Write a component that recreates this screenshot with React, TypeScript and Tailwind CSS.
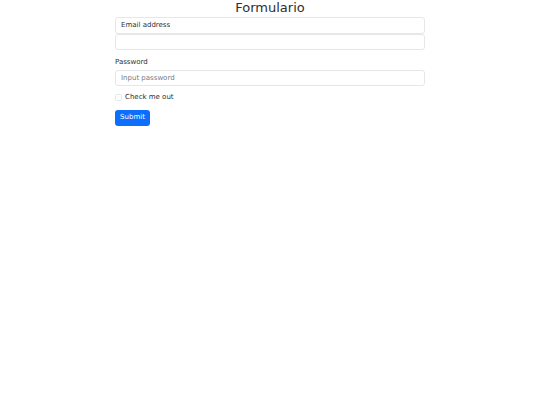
export default function App() {
  return (
    <div className="min-h-screen bg-white text-[#2b2f33] font-['DejaVu_Sans',sans-serif]">
      <div className="w-[310px] mx-auto">
        <h1 className="text-[13px] leading-[16px] h-[17px] text-center">Formulario</h1>

        <form>
          <label className="flex items-center h-[16.5px] px-[5px] border border-[#e5e8eb] rounded-[3px] text-[7px]">
            Email address
          </label>
          <input
            type="email"
            className="block w-full h-[16.5px] px-[5px] border border-[#e5e8eb] rounded-[3px] text-[7px] outline-none"
          />

          <label className="block mt-[7px] mb-[2.5px] text-[7px] leading-[10.5px]">Password</label>
          <input
            type="password"
            placeholder="Input password"
            className="block w-full h-[16px] px-[5px] border border-[#e5e8eb] rounded-[3px] text-[7px] outline-none placeholder:text-[#757b81]"
          />

          <div className="mt-[6.5px] h-[10px] flex items-center gap-[3px] text-[7px]">
            <span className="w-[7px] h-[7px] border border-[#e5e8eb] rounded-[1.5px]" />
            <span>Check me out</span>
          </div>

          <button
            type="button"
            className="mt-[7px] h-[16px] w-[35px] bg-[#0d6efd] text-white text-[7px] rounded-[3px] flex items-center justify-center"
          >
            Submit
          </button>
        </form>
      </div>
    </div>
  )
}
